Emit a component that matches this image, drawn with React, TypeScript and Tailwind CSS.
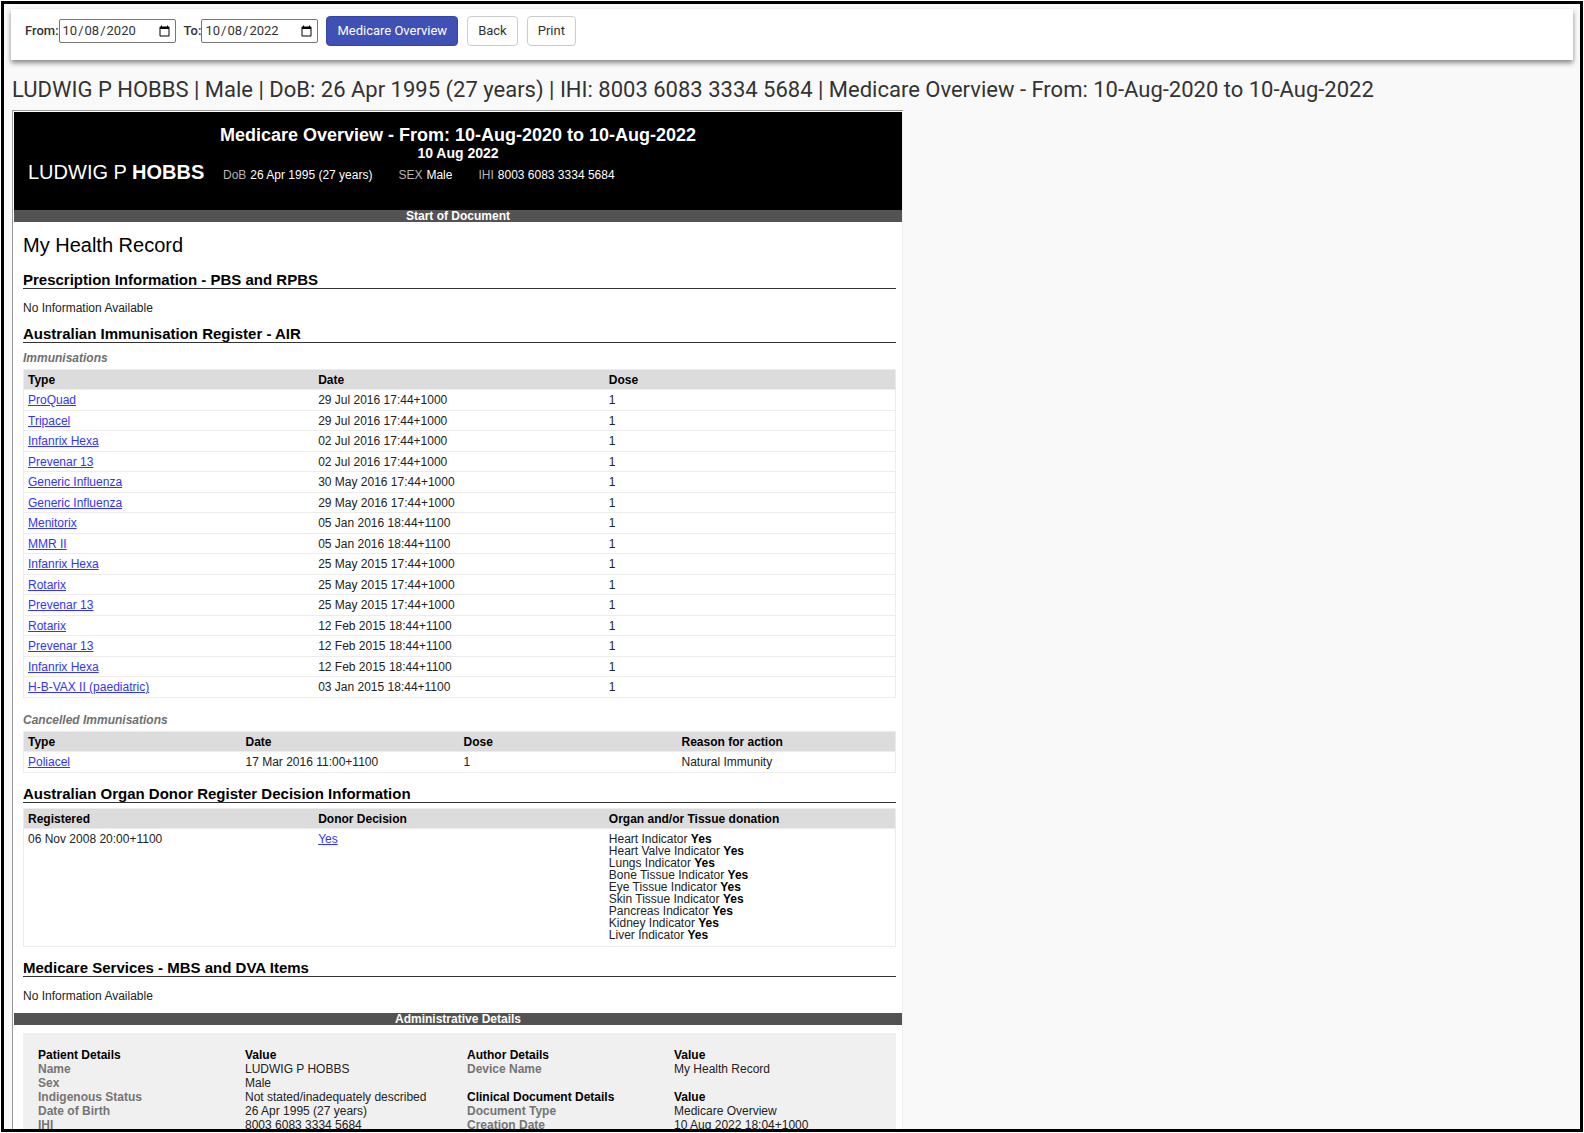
import type { ReactNode } from 'react';

const immunisations = [
  ['ProQuad', '29 Jul 2016 17:44+1000'],
  ['Tripacel', '29 Jul 2016 17:44+1000'],
  ['Infanrix Hexa', '02 Jul 2016 17:44+1000'],
  ['Prevenar 13', '02 Jul 2016 17:44+1000'],
  ['Generic Influenza', '30 May 2016 17:44+1000'],
  ['Generic Influenza', '29 May 2016 17:44+1000'],
  ['Menitorix', '05 Jan 2016 18:44+1100'],
  ['MMR II', '05 Jan 2016 18:44+1100'],
  ['Infanrix Hexa', '25 May 2015 17:44+1000'],
  ['Rotarix', '25 May 2015 17:44+1000'],
  ['Prevenar 13', '25 May 2015 17:44+1000'],
  ['Rotarix', '12 Feb 2015 18:44+1100'],
  ['Prevenar 13', '12 Feb 2015 18:44+1100'],
  ['Infanrix Hexa', '12 Feb 2015 18:44+1100'],
  ['H-B-VAX II (paediatric)', '03 Jan 2015 18:44+1100'],
];

const organs = ['Heart', 'Heart Valve', 'Lungs', 'Bone Tissue', 'Eye Tissue', 'Skin Tissue', 'Pancreas', 'Kidney', 'Liver'];

const patientDetails = [
  ['Name', 'LUDWIG P HOBBS'],
  ['Sex', 'Male'],
  ['Indigenous Status', 'Not stated/inadequately described'],
  ['Date of Birth', '26 Apr 1995 (27 years)'],
  ['IHI', '8003 6083 3334 5684'],
];

const authorDetails = [['Device Name', 'My Health Record']];

const documentDetails = [
  ['Document Type', 'Medicare Overview'],
  ['Creation Date', '10 Aug 2022 18:04+1000'],
];

function SectionHeading({ children }: { children: ReactNode }) {
  return <h3 className="border-b border-[#333] text-[15px] leading-[17px] font-bold text-black">{children}</h3>;
}

function SubHeading({ children }: { children: ReactNode }) {
  return <h4 className="text-xs leading-3 font-bold text-[#707070] italic">{children}</h4>;
}

function Bar({ children }: { children: ReactNode }) {
  return <div className="bg-[#535353] text-center text-xs leading-3 font-bold text-white">{children}</div>;
}

function DocLink({ children }: { children: ReactNode }) {
  return (
    <a href="#" className="text-[#3333ff] underline">
      {children}
    </a>
  );
}

function DataTable({ columns, children }: { columns: string[]; children: ReactNode }) {
  return (
    <table className="w-full table-fixed border-collapse border border-[#ececec] text-left">
      <thead>
        <tr className="h-5 bg-[#dcdcdc] text-black">
          {columns.map((column) => (
            <th key={column} scope="col" className="px-1 font-bold">
              {column}
            </th>
          ))}
        </tr>
      </thead>
      <tbody>{children}</tbody>
    </table>
  );
}

function DetailTable({ title, rows }: { title: string; rows: string[][] }) {
  return (
    <table className="w-full table-fixed text-left leading-[14px]">
      <thead>
        <tr className="text-black">
          <th scope="col" className="font-bold">{title}</th>
          <th scope="col" className="font-bold">Value</th>
        </tr>
      </thead>
      <tbody>
        {rows.map(([label, value]) => (
          <tr key={label}>
            <th scope="row" className="font-bold text-[#757575]">{label}</th>
            <td className="whitespace-nowrap">{value}</td>
          </tr>
        ))}
      </tbody>
    </table>
  );
}

function DateField({ id, label, value }: { id: string; label: string; value: string }) {
  return (
    <div className="flex items-center">
      <label htmlFor={id} className="font-medium">{label}</label>
      <input
        id={id}
        type="date"
        defaultValue={value}
        className="h-6 w-[117px] rounded-xs border border-[#767676] bg-white px-[2px] text-[13px]"
      />
    </div>
  );
}

function Toolbar() {
  return (
    <form className="flex h-[51px] items-start bg-white px-[14px] pt-[7px] text-[13px] text-[#333] shadow-[0_3px_5px_rgba(0,0,0,0.45)]">
      <div className="flex h-[30px] items-center gap-2">
        <DateField id="from" label="From:" value="2020-10-08" />
        <DateField id="to" label="To:" value="2022-10-08" />
        <div className="flex gap-[9px]">
          <button type="button" className="h-[30px] rounded-sm border border-[#3445a5] bg-[#3f51b5] px-[10px] text-white">
            Medicare Overview
          </button>
          <button type="button" className="h-[30px] rounded-sm border border-[#ccc] bg-white px-[10px]">
            Back
          </button>
          <button type="button" className="h-[30px] rounded-sm border border-[#ccc] bg-white px-[10px]">
            Print
          </button>
        </div>
      </div>
    </form>
  );
}

function DocumentHeader() {
  return (
    <header className="h-[98px] bg-black pt-3 text-white">
      <h2 className="text-center text-lg leading-[22px] font-bold">Medicare Overview - From: 10-Aug-2020 to 10-Aug-2022</h2>
      <p className="text-center text-sm leading-[14px] font-bold">10 Aug 2022</p>
      <div className="flex items-baseline px-[14px] leading-6">
        <p className="w-[195px] text-xl leading-6">
          LUDWIG P <b>HOBBS</b>
        </p>
        <dl className="flex gap-[26px] leading-4">
          {[
            ['DoB', '26 Apr 1995 (27 years)'],
            ['SEX', 'Male'],
            ['IHI', '8003 6083 3334 5684'],
          ].map(([label, value]) => (
            <div key={label} className="flex gap-1">
              <dt className="text-[#b5b5b5]">{label}</dt>
              <dd>{value}</dd>
            </div>
          ))}
        </dl>
      </div>
    </header>
  );
}

export default function App() {
  return (
    <div className="h-screen bg-white p-px">
      <div className="h-full overflow-hidden border-3 border-black bg-[#f9f9f9] px-[7px] pt-[5px] font-['Roboto',sans-serif]">
        <Toolbar />
        <h1 className="mt-4 pl-px text-[22px] leading-7 whitespace-nowrap text-[#333]">
          LUDWIG P HOBBS | Male | DoB: 26 Apr 1995 (27 years) | IHI: 8003 6083 3334 5684 | Medicare Overview - From:
          10-Aug-2020 to 10-Aug-2022
        </h1>

        <main className="mt-[6px] ml-px w-[891px] max-w-full border-t border-l border-[#999] bg-white pt-px pl-px font-['Liberation_Sans',Arial,sans-serif] text-xs leading-3 text-[#222]">
          <div className="border-r border-[#f0f0f0]">
            <DocumentHeader />
            <Bar>Start of Document</Bar>

            <div className="pr-[6px] pl-[9px]">
              <h2 className="pt-[11px] text-xl leading-6 text-black">My Health Record</h2>

              <section className="pt-[14px]">
                <SectionHeading>Prescription Information - PBS and RPBS</SectionHeading>
                <p className="pt-[13px]">No Information Available</p>
              </section>

              <section className="pt-[11px]">
                <SectionHeading>Australian Immunisation Register - AIR</SectionHeading>
                <div className="pt-[9px]">
                  <SubHeading>Immunisations</SubHeading>
                </div>
                <div className="pt-[5px]">
                  <DataTable columns={['Type', 'Date', 'Dose']}>
                    {immunisations.map(([type, date], i) => (
                      <tr key={i} className="h-5 border-t border-[#ececec] odd:h-[21px]">
                        <td className="px-1">
                          <DocLink>{type}</DocLink>
                        </td>
                        <td className="px-1">{date}</td>
                        <td className="px-1">1</td>
                      </tr>
                    ))}
                  </DataTable>
                </div>
                <div className="pt-4">
                  <SubHeading>Cancelled Immunisations</SubHeading>
                </div>
                <div className="pt-[5px]">
                  <DataTable columns={['Type', 'Date', 'Dose', 'Reason for action']}>
                    <tr className="h-[21px] border-t border-[#ececec]">
                      <td className="px-1">
                        <DocLink>Poliacel</DocLink>
                      </td>
                      <td className="px-1">17 Mar 2016 11:00+1100</td>
                      <td className="px-1">1</td>
                      <td className="px-1">Natural Immunity</td>
                    </tr>
                  </DataTable>
                </div>
              </section>

              <section className="pt-3">
                <SectionHeading>Australian Organ Donor Register Decision Information</SectionHeading>
                <div className="pt-[5px]">
                  <DataTable columns={['Registered', 'Donor Decision', 'Organ and/or Tissue donation']}>
                    <tr className="border-t border-[#ececec] align-top">
                      <td className="px-1 py-1">06 Nov 2008 20:00+1100</td>
                      <td className="px-1 py-1">
                        <DocLink>Yes</DocLink>
                      </td>
                      <td className="px-1 pt-1 pb-[5px]">
                        <ul>
                          {organs.map((organ) => (
                            <li key={organ}>
                              {organ} Indicator <b className="text-black">Yes</b>
                            </li>
                          ))}
                        </ul>
                      </td>
                    </tr>
                  </DataTable>
                </div>
              </section>

              <section className="pt-3 pb-[11px]">
                <SectionHeading>Medicare Services - MBS and DVA Items</SectionHeading>
                <p className="pt-[13px]">No Information Available</p>
              </section>
            </div>

            <Bar>Administrative Details</Bar>

            <div className="pt-2 pr-[6px] pl-[9px]">
              <div className="grid grid-cols-2 gap-x-[15px] bg-[#f0f0f0] p-[15px]">
                <DetailTable title="Patient Details" rows={patientDetails} />
                <div className="flex flex-col gap-[14px]">
                  <DetailTable title="Author Details" rows={authorDetails} />
                  <DetailTable title="Clinical Document Details" rows={documentDetails} />
                </div>
              </div>
            </div>
          </div>
        </main>
      </div>
    </div>
  );
}
